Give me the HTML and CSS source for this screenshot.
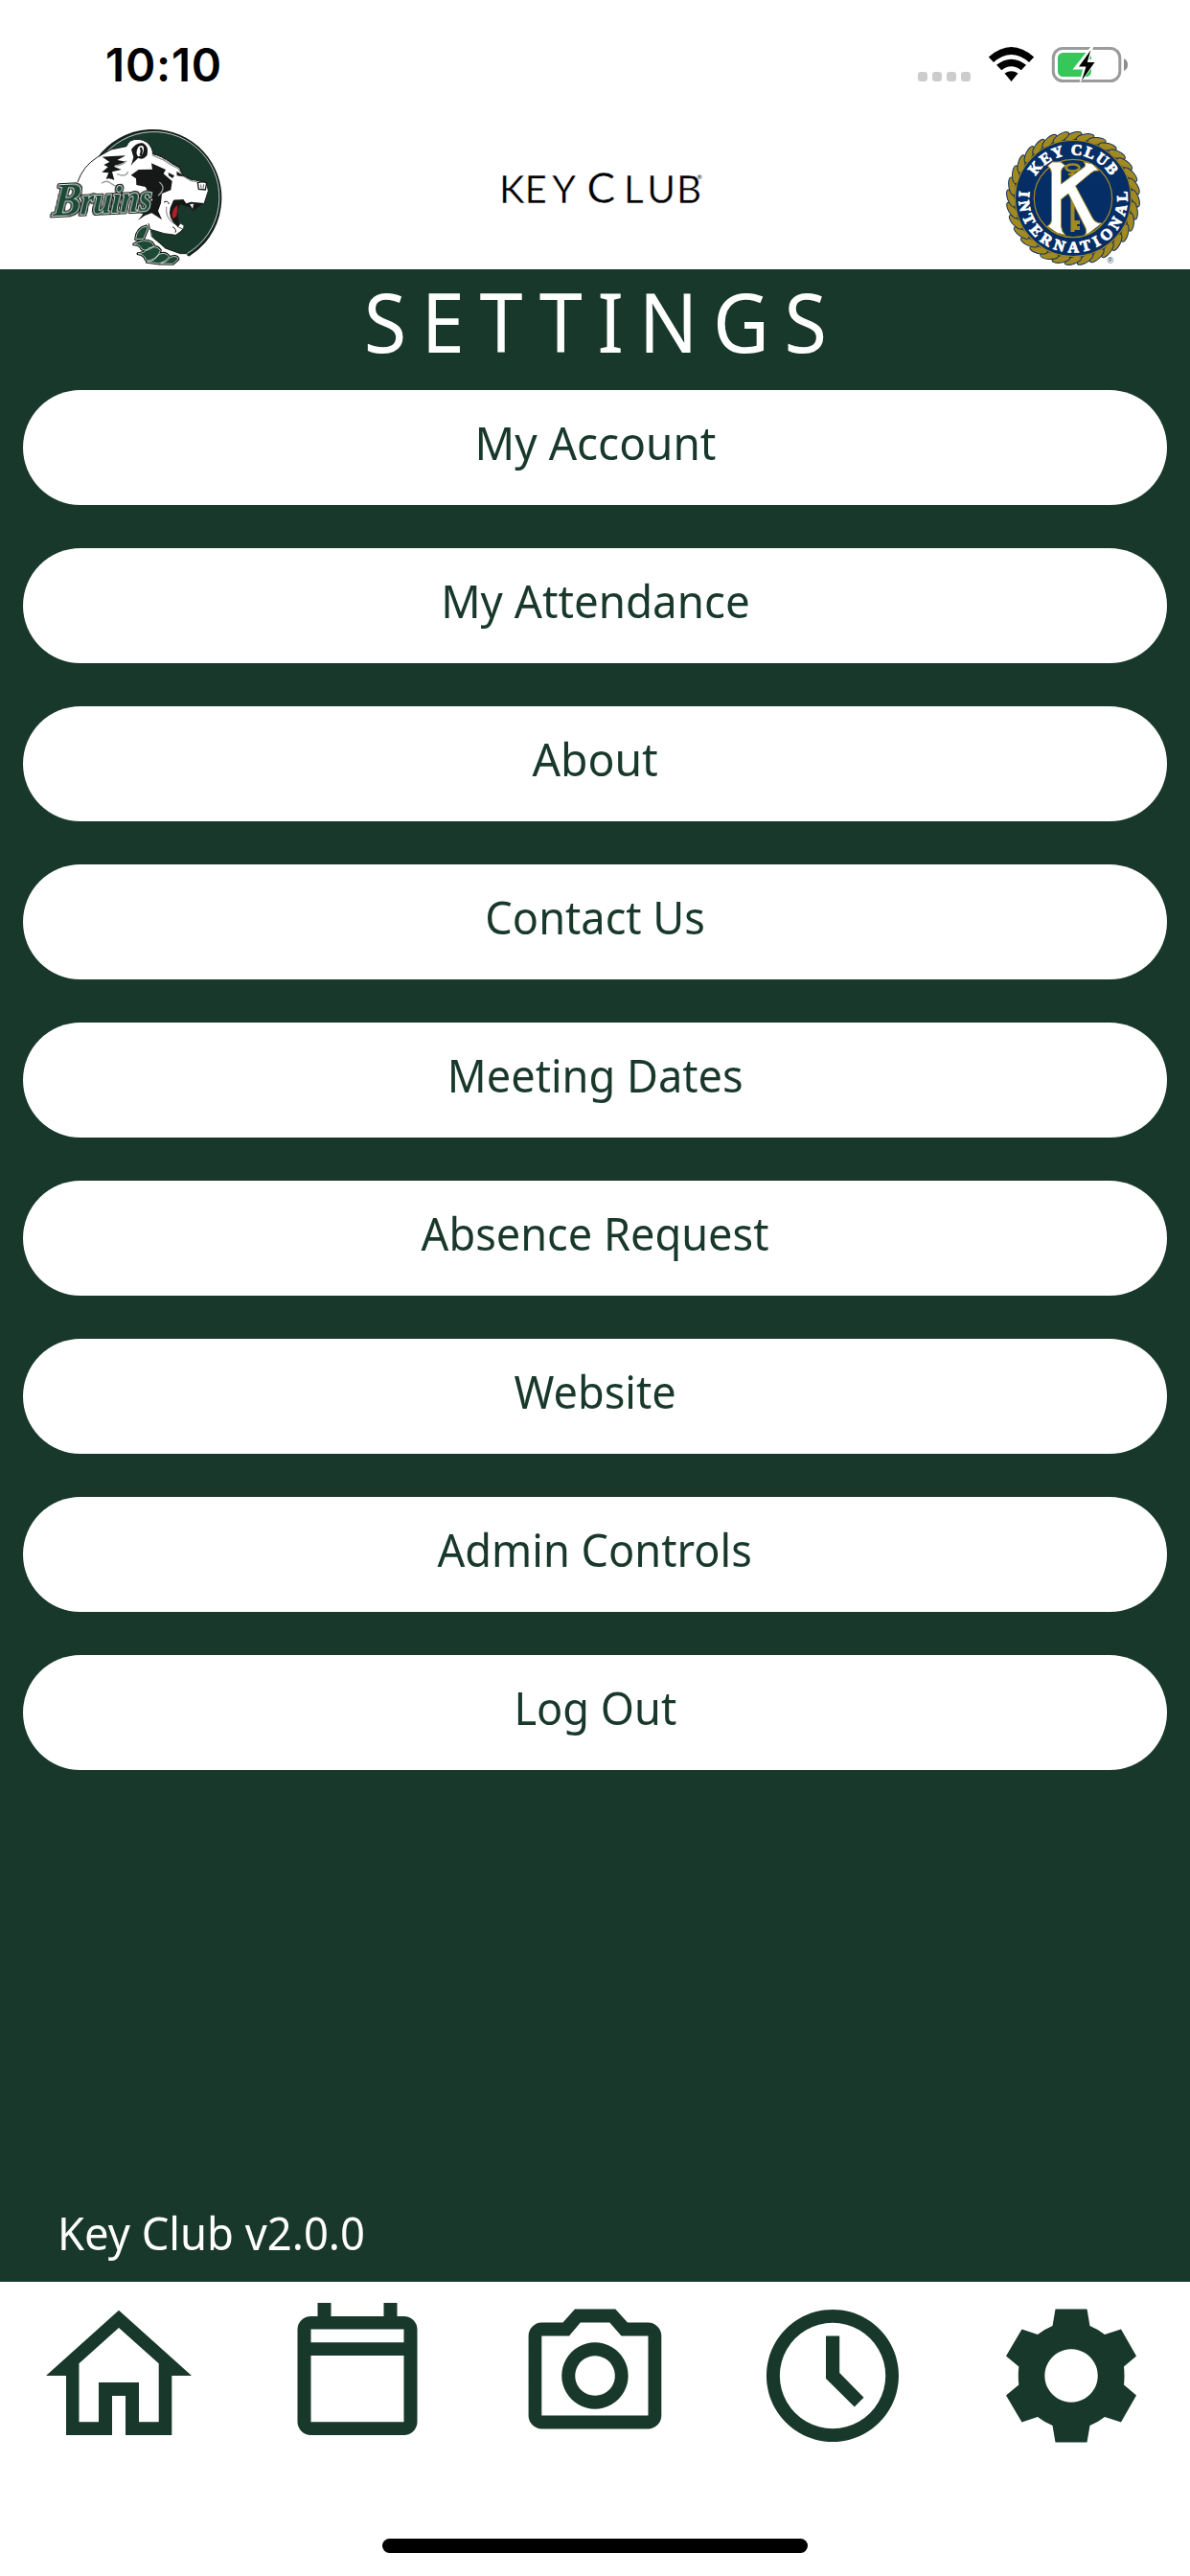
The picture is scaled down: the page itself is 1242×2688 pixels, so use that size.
FILE: index.html
```html
<!DOCTYPE html>
<html lang="en">
<head>
<meta charset="utf-8">
<title>Key Club Settings</title>
<link rel="stylesheet" href="styles.css">
</head>
<body>
<div class="app">
  <div class="status">
    <span class="time">10:10</span>
    <svg class="indicators" width="222" height="42" viewBox="956 46 222 42">
      <g fill="#ccc"><rect x="958" y="75" width="10" height="10" rx="3.2"/><rect x="973" y="75" width="10" height="10" rx="3.2"/><rect x="988" y="75" width="10" height="10" rx="3.2"/><rect x="1003" y="75" width="10" height="10" rx="3.2"/></g>
      <path d="M1031.8 59.5Q1055.5 38.500 1079.200 59.500L1074 65Q1055.500 49 1037 65ZM1040 67.800Q1055.500 55.500 1071 67.800L1065.800 73.300Q1055.500 65 1045.300 73.300ZM1048.500 76.500Q1055.500 72 1062.500 76.500L1055.500 85Z"/>
      <rect x="1099.300" y="50.500" width="69.500" height="34" rx="10" fill="none" stroke="#9b9b9b" stroke-width="3"/>
      <path d="M1173 61Q1177 63 1177 67.500Q1177 72 1173 74Z" fill="#8c8c8c"/>
      <rect x="1104" y="55" width="35" height="25" rx="5.500" fill="#35c759"/>
      <path d="M1139 48L1119.500 72.500H1130L1126.500 87L1147 62H1137L1141.500 48Z" fill="#fff"/>
      <path d="M1138.300 52.500L1126 69.500H1133.500L1129 84L1142.500 65H1134.800Z"/>
    </svg>
  </div>

  <header class="header">
    <svg class="bruins" width="220" height="162" viewBox="0 0 660 486">
      <path d="M217 135A212.500 212.500 0 1 1 500 441L474 440L426 423L409 407L381 385L380 358L340 240Q250 150 217 135Z" fill="#18382b"/>
      <path d="M217 135A212.500 212.500 0 1 1 500 441" fill="none" stroke="#151a18" stroke-width="5"/>
      <path d="M226 138A204.500 204.500 0 1 1 495 434" fill="none" stroke="#dfe5e2" stroke-width="2.500"/>
      <path d="M153 210Q170 160 215 132L258 108L306 98Q314 74 345 76Q374 80 385 105L390 122Q425 130 447 151L472 165L481 188L508 202L557 210L562 238L549 278L516 298L502 290L482 268L455 267Q447 290 462 320L486 352L477 364L460 376L424 371L380 358L375 340L350 325L335 306L150 270Z" fill="#fff"/>
      <path d="M153 210Q170 160 215 132L258 108L306 98Q314 74 345 76Q374 80 385 105L390 122Q425 130 447 151L472 165L481 188L508 202L557 210L562 238L549 278L516 298L502 290L482 268L455 267Q447 290 462 320L486 352L477 364L460 376L424 371L380 358L375 340" fill="none" stroke="#1a1f1d" stroke-width="3"/>
      <path d="M230 131L260 129L304 127L277 141L305 146L266 161L290 171L261 178L268 204Q254 196 242 200L250 181L229 179L248 163L235 156L253 147Z" fill="#151817"/>
      <path d="M320 188L344 171L387 170L384 151L429 171L422 184L449 207L445 235L417 246L414 276L405 300L417 328L385 307L363 315L342 330L358 310L340 304L375 285L388 265L365 225L337 219L336 199Z" fill="#151817"/>
      <path d="M321 108Q337 84 357 88Q377 97 371 125Q357 143 343 134L326 151L320 160L328 132Z" fill="#151817"/>
      <path d="M344 99Q361 90 360 109Q358 130 342 130Q332 118 344 99Z" fill="#fff"/>
      <path d="M349 103Q357 108 350 127" fill="none" stroke="#151817" stroke-width="7"/>
      <path d="M386 125L406 134L425 142L444 155L469 168L480 189L508 206L529 209" fill="none" stroke="#8e9390" stroke-width="4"/>
      <path d="M386 120L408 128L447 149L474 165L482 189L512 203" fill="none" stroke="#151817" stroke-width="3" stroke-dasharray="14 3"/>
      <path d="M437 180L456 190L450 198L438 190Z M463 176L479 187L482 193L464 190Z" fill="#151817"/>
      <path d="M228 214Q244 202 256 213T284 223M270 158Q294 160 306 143M277 185Q305 196 311 177M409 210Q433 228 405 253M431 287Q426 323 458 342" fill="none" stroke="#999f9c" stroke-width="4"/>
      <path d="M453 267L484 264L493 277L508 272L550 276L515 299L501 289L475 279L464 300L474 330L482 355L467 351Q433 323 443 290Z" fill="#151817"/>
      <path d="M473 284L500 291L515 301L540 283L545 320L530 359L475 355Q463 319 473 284Z" fill="#18382b"/>
      <path d="M466 282L463 317L450 324Q444 298 466 282Z" fill="#b32024"/>
      <path d="M467 350L475 339L486 346L484 358ZM503 279L517 277L514 296Z" fill="#fff" stroke="#151817" stroke-width="2"/>
      <path d="M529 212Q545 206 557 213L553 234L532 232Z" fill="#fff" stroke="#151817" stroke-width="4"/>
      <path d="M539 218L540 230M548 217L546 230" stroke="#151817" stroke-width="2"/>
      <path d="M423 273Q436 266 439 279M450 350Q464 357 459 368" fill="none" stroke="#151817" stroke-width="3"/>
      <path d="M335 389Q338 354 368 348L372 357L359 388ZM329 405Q361 384 385 399L393 410Q372 430 354 420Q348 404 329 405ZM342 434Q362 433 375 417Q401 406 412 424L404 442Q374 463 366 452Q363 437 342 434ZM370 460Q397 457 403 439Q426 425 440 444Q427 461 408 465ZM413 465Q437 458 442 446Q464 437 468 451L451 466Z" fill="#151b18" stroke="#151b18" stroke-width="9" stroke-linejoin="round"/>
      <path d="M335 389Q338 354 368 348L372 357L359 388ZM329 405Q361 384 385 399L393 410Q372 430 354 420Q348 404 329 405ZM342 434Q362 433 375 417Q401 406 412 424L404 442Q374 463 366 452Q363 437 342 434ZM370 460Q397 457 403 439Q426 425 440 444Q427 461 408 465ZM413 465Q437 458 442 446Q464 437 468 451L451 466Z" fill="#1b4935" stroke="#dbe4df" stroke-width="2.500"/>
      <path d="M380 361L383 383L409 405L426 421L474 438L496 438" fill="none" stroke="#fff" stroke-width="7"/>
      <path d="M382 361L385 381L411 402L428 417L475 434L497 434" fill="none" stroke="#151817" stroke-width="2.500"/>
      <text class="bruins-word" transform="translate(74 316) rotate(-3) skewX(-8)" textLength="309" lengthAdjust="spacingAndGlyphs"><tspan font-size="146">B</tspan><tspan font-size="116">ruins</tspan></text>
    </svg>

    <svg class="wordmark" width="220" height="64" viewBox="518 166 220 64">
      <text class="wordmark-text" y="212" font-size="40.500" x="521 547.500 576 602 612.500 651 675.300 706">KEY <tspan font-size="44.500">C</tspan>LUB</text>
      <text y="187" x="727.500" font-size="6.500">®</text>
    </svg>

    <svg class="seal" width="150" height="150" viewBox="1045 132 150 150">
      <defs>
        <path id="arc-top" d="M1074.500 207A45.500 45.500 0 0 1 1165.500 207"/>
        <path id="arc-bottom" d="M1064.700 195.300A56.500 56.500 0 1 0 1175.300 195.300"/>
        <ellipse id="strand" cx="1120" cy="142.300" rx="9.500" ry="3.700" transform="rotate(-20 1120 142.300)"/>
        <g id="strands"><use href="#strand"/><use href="#strand" transform="rotate(11.250 1120 207)"/><use href="#strand" transform="rotate(22.500 1120 207)"/><use href="#strand" transform="rotate(33.750 1120 207)"/></g>
        <g id="quarter"><use href="#strands"/><use href="#strands" transform="rotate(45 1120 207)"/></g>
      </defs>
      <circle cx="1120" cy="207" r="66" fill="#082d62"/>
      <g fill="#a28a23" stroke="#12315a" stroke-width="1"><use href="#quarter"/><use href="#quarter" transform="rotate(90 1120 207)"/><use href="#quarter" transform="rotate(180 1120 207)"/><use href="#quarter" transform="rotate(270 1120 207)"/></g>
      <circle cx="1120" cy="207" r="60.500" fill="#062e66" stroke="#a28a23" stroke-width="1.200"/>
      <circle cx="1120" cy="207" r="40.700" fill="#062e66" stroke="#a28a23" stroke-width="1.200"/>
      <text class="seal-text" text-anchor="middle"><textPath href="#arc-top" startOffset="50%" textLength="94">KEY CLUB</textPath></text>
      <text class="seal-text" text-anchor="middle"><textPath href="#arc-bottom" startOffset="50%" textLength="192">INTERNATIONAL</textPath></text>
      <g fill="none" stroke="#a28a23"><ellipse cx="1119.500" cy="175" rx="7" ry="3.500" stroke-width="2.600"/><path d="M1119.500 179V242" stroke-width="4"/><path d="M1115 182H1124M1116 185H1123" stroke-width="2"/></g>
      <path d="M1120 230H1127V234H1124V236H1127V240H1120Z" fill="#a28a23"/>
      <path d="M1093.500 173L1098.500 169H1107L1112 173Q1107.500 175 1107.500 180V192L1132 174Q1134 172 1131 169L1140 171L1147 178Q1142 177 1138 181L1122.500 194L1140 227Q1143 233 1150 233L1137 243L1132 246Q1135 242 1133 238L1115 202L1107.500 208V236Q1108 242 1112 245.500L1103 243L1093 236Q1097.500 234 1097.500 229V181Q1097.500 176 1093.500 173Z" fill="#fff" stroke="#a28a23" stroke-width="1"/>
      <text class="seal-reg" x="1155.500" y="274.500">®</text>
    </svg>
  </header>

  <main class="main">
    <h1 class="title"><span>SETTINGS</span></h1>
    <nav class="menu">
      <a class="item"><span>My Account</span></a>
      <a class="item"><span>My Attendance</span></a>
      <a class="item"><span>About</span></a>
      <a class="item"><span>Contact Us</span></a>
      <a class="item"><span>Meeting Dates</span></a>
      <a class="item"><span>Absence Request</span></a>
      <a class="item"><span>Website</span></a>
      <a class="item"><span>Admin Controls</span></a>
      <a class="item"><span>Log Out</span></a>
    </nav>
    <p class="version"><span>Key Club v2.0.0</span></p>
  </main>

  <footer class="tabs">
    <div class="tabrow">
      <svg class="tab" viewBox="40 2395 168 168"><path fill-rule="evenodd" d="M124 2410.700L200 2479H179.300V2541H131V2500H117V2541H69V2479H48ZM124 2429L82.500 2466.300V2527.300H103V2486H145V2527.300H165.700V2466.300Z"/></svg>
      <svg class="tab" viewBox="288.500 2395 168 168"><path fill-rule="evenodd" d="M331 2403H345V2417H400V2403H414V2417H421A14 14 0 0 1 435 2431V2527A14 14 0 0 1 421 2541H324A14 14 0 0 1 310 2527V2431A14 14 0 0 1 324 2417H331ZM324 2430.500V2444.300H421V2430.500ZM324 2458V2527.300H421V2458Z"/></svg>
      <svg class="tab" viewBox="537 2395 168 168"><path fill-rule="evenodd" d="M600 2409.500H642.300L655 2423.500H676.500A14 14 0 0 1 690.300 2437.500V2520.500A14 14 0 0 1 676.500 2534.500H565.300A14 14 0 0 1 551.600 2520.500V2437.500A14 14 0 0 1 565.300 2423.500H587.500ZM605.800 2423.500L594 2437.500H565.300V2520.500H676.500V2437.500H648.500L636.300 2423.500ZM621 2444.300A34.700 34.700 0 1 1 620.900 2444.300ZM621 2458.200A20.800 20.800 0 1 0 621.100 2458.200Z"/></svg>
      <svg class="tab" viewBox="785.500 2395 168 168"><path fill-rule="evenodd" d="M869.500 2410A69 69 0 1 1 869.400 2410ZM869.500 2423.800A55.200 55.200 0 1 0 869.600 2423.800ZM862.500 2437.400H876.700V2476L902 2501.700L892.300 2511.400L862.500 2482Z"/></svg>
      <svg class="tab" viewBox="1034 2395 168 168"><path fill-rule="evenodd" d="M1101.500 2409.500H1134.500L1137.500 2427Q1146 2430.500 1153 2436L1170 2430.500L1186 2458.500L1173 2469.500Q1174 2479 1173 2488.500L1186 2499.500L1170 2527.500L1153 2522Q1146 2527.500 1137.500 2531L1134.500 2548.500H1101.500L1098.500 2531Q1090 2527.500 1083 2522L1066.500 2527.500L1050 2499.500L1063.300 2488.500Q1062.300 2479 1063.300 2469.500L1050 2458.500L1066.500 2430.500L1083 2436Q1090 2430.500 1098.500 2427ZM1118 2451.300A27.700 27.700 0 1 0 1118.100 2451.300Z"/></svg>
    </div>
    <div class="home-bar"></div>
  </footer>
</div>
</body>
</html>
```
FILE: styles.css
```css
* { box-sizing: border-box; }
body { margin: 0; background: #fff; font-family: "Noto Sans", sans-serif; }
.app { width: 1242px; height: 2688px; display: flex; flex-direction: column; }
.status { height: 120px; flex: none; display: flex; justify-content: space-between; align-items: flex-start; padding: 46px 64px 0 110px; }
.time { font: 600 47.500px/44px Inter, sans-serif; letter-spacing: 0.8px; }
.header { height: 161px; flex: none; display: flex; align-items: flex-start; padding: 0 47px 0 30px; overflow: hidden; }
.bruins { flex: none; }
.wordmark { flex: none; margin-top: 46px; margin-left: 268px; font-family: Lato, sans-serif; font-weight: 400; }
.wordmark-text { stroke: #fff; stroke-width: 0.500px; }
.seal { flex: none; margin-top: 12px; margin-left: auto; }
.bruins-word { font-family: "Liberation Serif", serif; font-weight: 700; font-style: italic; stroke-linejoin: round; fill: #1b4935; stroke: #e5ebe8; stroke-width: 6px; paint-order: stroke; filter: drop-shadow(3px 0 #151b18) drop-shadow(-3px 0 #151b18) drop-shadow(0 3px #151b18) drop-shadow(0 -3px #151b18); }
.seal-text { font: 700 16px "Liberation Serif", serif; fill: #fff; stroke: #fff; stroke-width: 0.9px; }
.seal-reg { font: 9px "Liberation Sans", sans-serif; fill: #12315a; }
.main { flex: 1; display: flex; flex-direction: column; background: #18382b; color: #fff; }
.title { margin: 0; height: 126px; font-weight: 400; font-size: 85.500px; line-height: 108px; letter-spacing: 16.500px; text-align: center; padding-left: 16px; }
.title span { display: inline-block; transform: scaleX(0.948); }
.menu { display: flex; flex-direction: column; gap: 45px; padding: 0 24px; }
.item { height: 120px; border-radius: 60px; background: #fff; color: #18382b; display: flex; align-items: center; justify-content: center; padding-bottom: 10px; font-size: 48px; line-height: 64px; white-space: pre; }
.item span { transform: scaleX(0.94); }
.item:nth-child(1) span { transform: scaleX(0.958); }
.item:nth-child(2) span { transform: scaleX(0.952); }
.item:nth-child(3) span { transform: scaleX(0.965); }
.version { margin: auto 0 0 60px; padding-bottom: 19px; font-size: 48px; line-height: 64px; }
.version span { display: inline-block; transform: scaleX(0.945); transform-origin: left; }
.tabs { height: 307px; flex: none; display: flex; flex-direction: column; align-items: center; justify-content: space-between; padding: 14px 0 24px; }
.tabrow { display: grid; grid-template-columns: repeat(5, 1fr); width: 100%; justify-items: center; }
.tab { width: 168px; height: 168px; fill: #18382b; }
.home-bar { width: 444px; height: 15px; border-radius: 8px; background: #000; }
```
